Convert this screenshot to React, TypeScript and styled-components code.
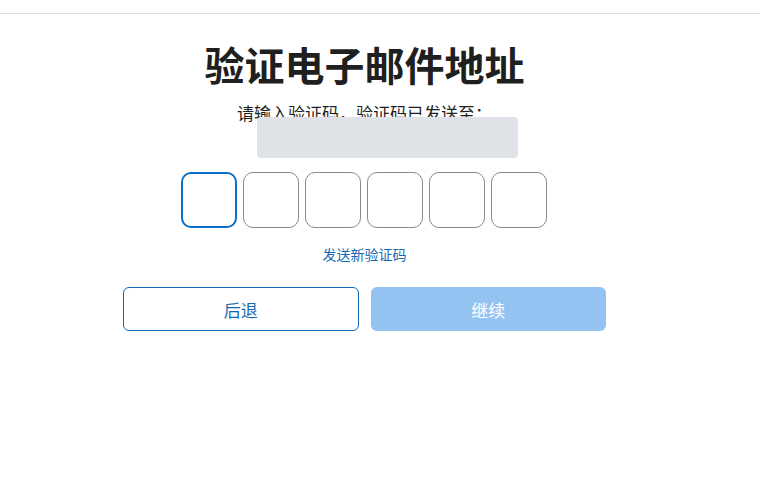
import styled, { createGlobalStyle } from "styled-components"

const GlobalStyle = createGlobalStyle`
  html, body {
    margin: 0;
    padding: 0;
    background: #ffffff;
  }
  body {
    font-family: "Noto Sans", "Noto Sans CJK SC", sans-serif;
    color: #1f1f1f;
  }
`

const TopBar = styled.div`
  height: 13px;
  border-bottom: 1px solid #dcdcdc;
`

const Main = styled.main`
  width: 483px;
  margin-left: 123px;
  display: flex;
  flex-direction: column;
  align-items: center;
`

const Title = styled.h1`
  margin: 26px 0 0;
  font-size: 40px;
  line-height: 52px;
  font-weight: 700;
  color: #1f1f1f;
`

const Prompt = styled.div`
  position: relative;
  margin-top: 11px;
  font-size: 17px;
  line-height: 22px;
  width: 100%;
  text-align: center;
  color: #1f1f1f;
  padding-bottom: 38px;
`

// redacted address
const AddressMask = styled.span`
  position: absolute;
  left: 134px;
  top: 14px;
  width: 261px;
  height: 41px;
  border-radius: 4px;
  background: #dfe2e6;
`

const CodeRow = styled.div`
  display: flex;
  gap: 6px;
  margin: 9px 1px 0 0;
`

const CodeBox = styled.input<{ $active?: boolean }>`
  box-sizing: border-box;
  width: 56px;
  height: 56px;
  border-radius: 10px;
  border: ${(p) => (p.$active ? "2px solid #0b6fc6" : "1px solid #8a8a8a")};
  background: #fff;
  outline: none;
  font-size: 24px;
  text-align: center;
`

const ResendLink = styled.a`
  margin-top: 17px;
  font-size: 14px;
  line-height: 20px;
  color: #1769b3;
  text-decoration: none;
  cursor: pointer;
`

const Actions = styled.div`
  width: 100%;
  display: grid;
  grid-template-columns: 1fr 1fr;
  gap: 12px;
  margin-top: 22px;
`

const Button = styled.button<{ $primary?: boolean }>`
  height: 44px;
  border-radius: 6px;
  font-family: inherit;
  font-size: 17px;
  border: ${(p) => (p.$primary ? "none" : "1px solid #1769b3")};
  background: ${(p) => (p.$primary ? "#95c3f1" : "#ffffff")};
  color: ${(p) => (p.$primary ? "#ffffff" : "#1769b3")};
  cursor: pointer;
`

export default function App() {
  return (
    <>
      <GlobalStyle />
      <TopBar />
      <Main>
        <Title>验证电子邮件地址</Title>
        <Prompt>
          请输入验证码，验证码已发送至：
          <AddressMask />
        </Prompt>
        <CodeRow>
          {[0, 1, 2, 3, 4, 5].map((i) => (
            <CodeBox key={i} $active={i === 0} maxLength={1} />
          ))}
        </CodeRow>
        <ResendLink>发送新验证码</ResendLink>
        <Actions>
          <Button>后退</Button>
          <Button $primary disabled>
            继续
          </Button>
        </Actions>
      </Main>
    </>
  )
}
